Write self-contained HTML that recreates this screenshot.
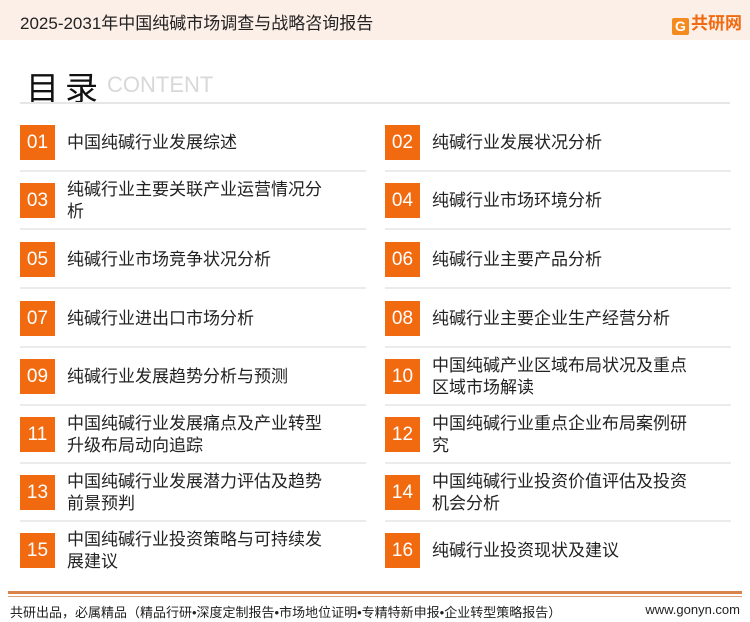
<!DOCTYPE html><html><head><meta charset="utf-8"><style>
body{margin:0;width:750px;height:622px;background:#fff;font-family:"Liberation Sans","Noto Sans CJK SC",sans-serif;position:relative;overflow:hidden}
.hd{position:absolute;left:0;top:0;width:750px;height:40px;background:#fcefe7}
.hd .t{position:absolute;left:20px;top:9px;font-size:17px;color:#222}
.logo{position:absolute;right:8px;top:9px;font-size:17px;font-weight:bold;color:#f26a10}
.lg{display:inline-block;width:17px;height:17px;background:#f58a1f;color:#fff;text-align:center;line-height:17px;font-size:14px;border-radius:2px;vertical-align:-2px;margin-right:2px}
.mt{position:absolute;left:26px;top:62px;font-size:33px;color:#111;letter-spacing:6px}
.ct{position:absolute;left:107px;top:72px;font-size:22px;color:#d8d8d8}
.ul{position:absolute;left:20px;top:102px;width:710px;height:2px;background:#e6e6e6}
.it{position:absolute;height:58px;width:346px}
.bx{position:absolute;left:0;width:35px;height:35px;background:#f26a10;color:#fff;font-size:19px;text-align:center;line-height:35px}
.tx{position:absolute;left:47px;font-size:17px;color:#222;line-height:22px;width:262px}
.ln{position:absolute;left:0;width:346px;height:2px;background:#ebebeb}
.f1{position:absolute;left:8px;top:591px;width:734px;height:3px;background:#d9824a}
.f2{position:absolute;left:8px;top:596px;width:734px;height:1px;background:#d9a07a}
.ft{position:absolute;left:10px;top:602px;font-size:13px;color:#222}
.fr{position:absolute;right:10px;top:602px;font-size:13px;color:#222}
</style></head><body>
<div class="hd"><div class="t">2025-2031年中国纯碱市场调查与战略咨询报告</div><div class="logo"><span class="lg">G</span>共研网</div></div>
<div class="mt">目录</div><div class="ct">CONTENT</div><div class="ul"></div>

<div class="it" style="left:20px;top:114px"><div class="bx" style="top:11px">01</div><div class="tx" style="top:18px">中国纯碱行业发展综述</div><div class="ln" style="top:56px"></div></div>
<div class="it" style="left:385px;top:114px"><div class="bx" style="top:11px">02</div><div class="tx" style="top:18px">纯碱行业发展状况分析</div><div class="ln" style="top:56px"></div></div>

<div class="it" style="left:20px;top:172px"><div class="bx" style="top:11px">03</div><div class="tx" style="top:7px">纯碱行业主要关联产业运营情况分析</div><div class="ln" style="top:56px"></div></div>
<div class="it" style="left:385px;top:172px"><div class="bx" style="top:11px">04</div><div class="tx" style="top:18px">纯碱行业市场环境分析</div><div class="ln" style="top:56px"></div></div>

<div class="it" style="left:20px;top:231px"><div class="bx" style="top:11px">05</div><div class="tx" style="top:18px">纯碱行业市场竞争状况分析</div><div class="ln" style="top:56px"></div></div>
<div class="it" style="left:385px;top:231px"><div class="bx" style="top:11px">06</div><div class="tx" style="top:18px">纯碱行业主要产品分析</div><div class="ln" style="top:56px"></div></div>

<div class="it" style="left:20px;top:290px"><div class="bx" style="top:11px">07</div><div class="tx" style="top:18px">纯碱行业进出口市场分析</div><div class="ln" style="top:56px"></div></div>
<div class="it" style="left:385px;top:290px"><div class="bx" style="top:11px">08</div><div class="tx" style="top:18px">纯碱行业主要企业生产经营分析</div><div class="ln" style="top:56px"></div></div>

<div class="it" style="left:20px;top:348px"><div class="bx" style="top:11px">09</div><div class="tx" style="top:18px">纯碱行业发展趋势分析与预测</div><div class="ln" style="top:56px"></div></div>
<div class="it" style="left:385px;top:348px"><div class="bx" style="top:11px">10</div><div class="tx" style="top:7px">中国纯碱产业区域布局状况及重点区域市场解读</div><div class="ln" style="top:56px"></div></div>

<div class="it" style="left:20px;top:406px"><div class="bx" style="top:11px">11</div><div class="tx" style="top:7px">中国纯碱行业发展痛点及产业转型升级布局动向追踪</div><div class="ln" style="top:56px"></div></div>
<div class="it" style="left:385px;top:406px"><div class="bx" style="top:11px">12</div><div class="tx" style="top:7px">中国纯碱行业重点企业布局案例研究</div><div class="ln" style="top:56px"></div></div>

<div class="it" style="left:20px;top:464px"><div class="bx" style="top:11px">13</div><div class="tx" style="top:7px">中国纯碱行业发展潜力评估及趋势前景预判</div><div class="ln" style="top:56px"></div></div>
<div class="it" style="left:385px;top:464px"><div class="bx" style="top:11px">14</div><div class="tx" style="top:7px">中国纯碱行业投资价值评估及投资机会分析</div><div class="ln" style="top:56px"></div></div>

<div class="it" style="left:20px;top:522px"><div class="bx" style="top:11px">15</div><div class="tx" style="top:7px">中国纯碱行业投资策略与可持续发展建议</div></div>
<div class="it" style="left:385px;top:522px"><div class="bx" style="top:11px">16</div><div class="tx" style="top:18px">纯碱行业投资现状及建议</div></div>

<div class="f1"></div><div class="f2"></div>
<div class="ft">共研出品，必属精品（精品行研•深度定制报告•市场地位证明•专精特新申报•企业转型策略报告）</div>
<div class="fr">www.gonyn.com</div>
</body></html>
